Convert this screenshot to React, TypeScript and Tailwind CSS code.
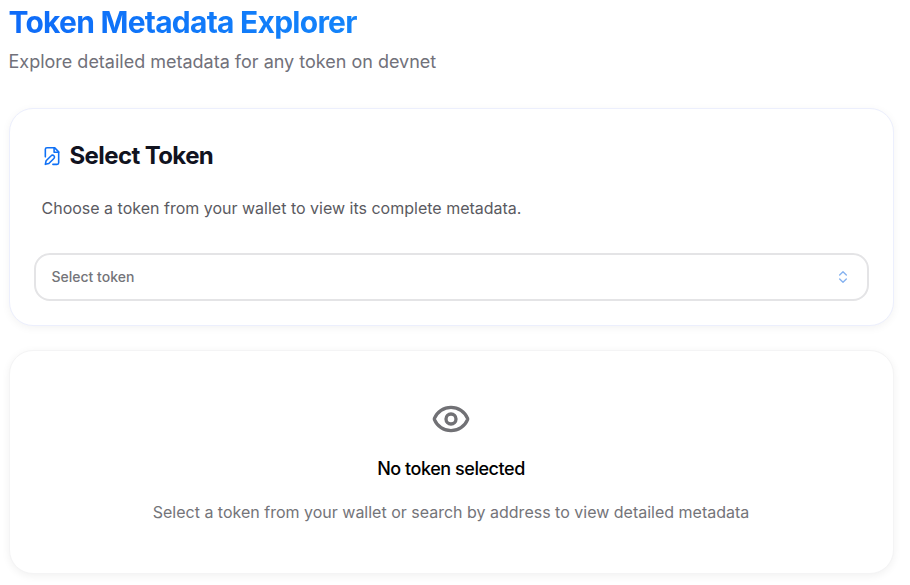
import { ChevronsUpDown, Eye } from "lucide-react";

export default function App() {
  return (
    <main className="h-[585px] overflow-hidden bg-white pl-[8.5px] pr-[16.5px] pt-1 font-['Inter',sans-serif]">
      <h1 className="w-fit bg-gradient-to-r from-[#0f6bf8] to-[#1484fa] bg-clip-text text-[30px] font-bold leading-9 tracking-[-0.75px] text-transparent">
        Token Metadata Explorer
      </h1>
      <p className="mt-2 text-lg leading-7 text-[#71717a]">Explore detailed metadata for any token on devnet</p>
      <section className="mt-8 h-[218px] rounded-3xl border border-[#eceffd] bg-white px-6 shadow-[0_2px_8px_rgba(0,0,0,0.05)]">
        <div className="flex items-center gap-2 px-2 pt-[31px]">
          <svg className="size-5" viewBox="0 0 24 24" fill="none" stroke="#0f70f5" strokeWidth="1.9" strokeLinecap="round" strokeLinejoin="round">
            <path d="M4 13V4a2 2 0 0 1 2-2h9l5 5v13a2 2 0 0 1-2 2h-5" />
            <path d="M14.5 2v5.5H20" />
            <path d="M11 11.7a2.3 2.3 0 1 1 3.25 3.25L8.2 21 4 22l.95-4.25Z" />
          </svg>
          <h2 className="text-2xl font-bold leading-8 tracking-[-0.6px] text-[#11131f]">Select Token</h2>
        </div>
        <p className="mt-6 px-2 text-base leading-6 text-[#5a5a61]">Choose a token from your wallet to view its complete metadata.</p>
        <button className="mt-[33px] flex h-12 w-full items-center justify-between rounded-2xl border-2 border-[#e4e4e6] px-4 text-sm font-medium text-[#747479]">
          Select token
          <ChevronsUpDown className="size-4 text-[#85b2f0]" />
        </button>
      </section>
      <section className="mt-6 flex h-[224px] flex-col items-center rounded-3xl border border-[#f4f4f5] bg-white pt-12 shadow-[0_2px_8px_rgba(0,0,0,0.06)]">
        <Eye className="size-10 text-[#717175]" />
        <h3 className="mt-4 text-lg font-medium leading-7 tracking-tight text-black">No token selected</h3>
        <p className="mt-[17px] text-base leading-6 text-[#747479]">Select a token from your wallet or search by address to view detailed metadata</p>
      </section>
    </main>
  );
}
